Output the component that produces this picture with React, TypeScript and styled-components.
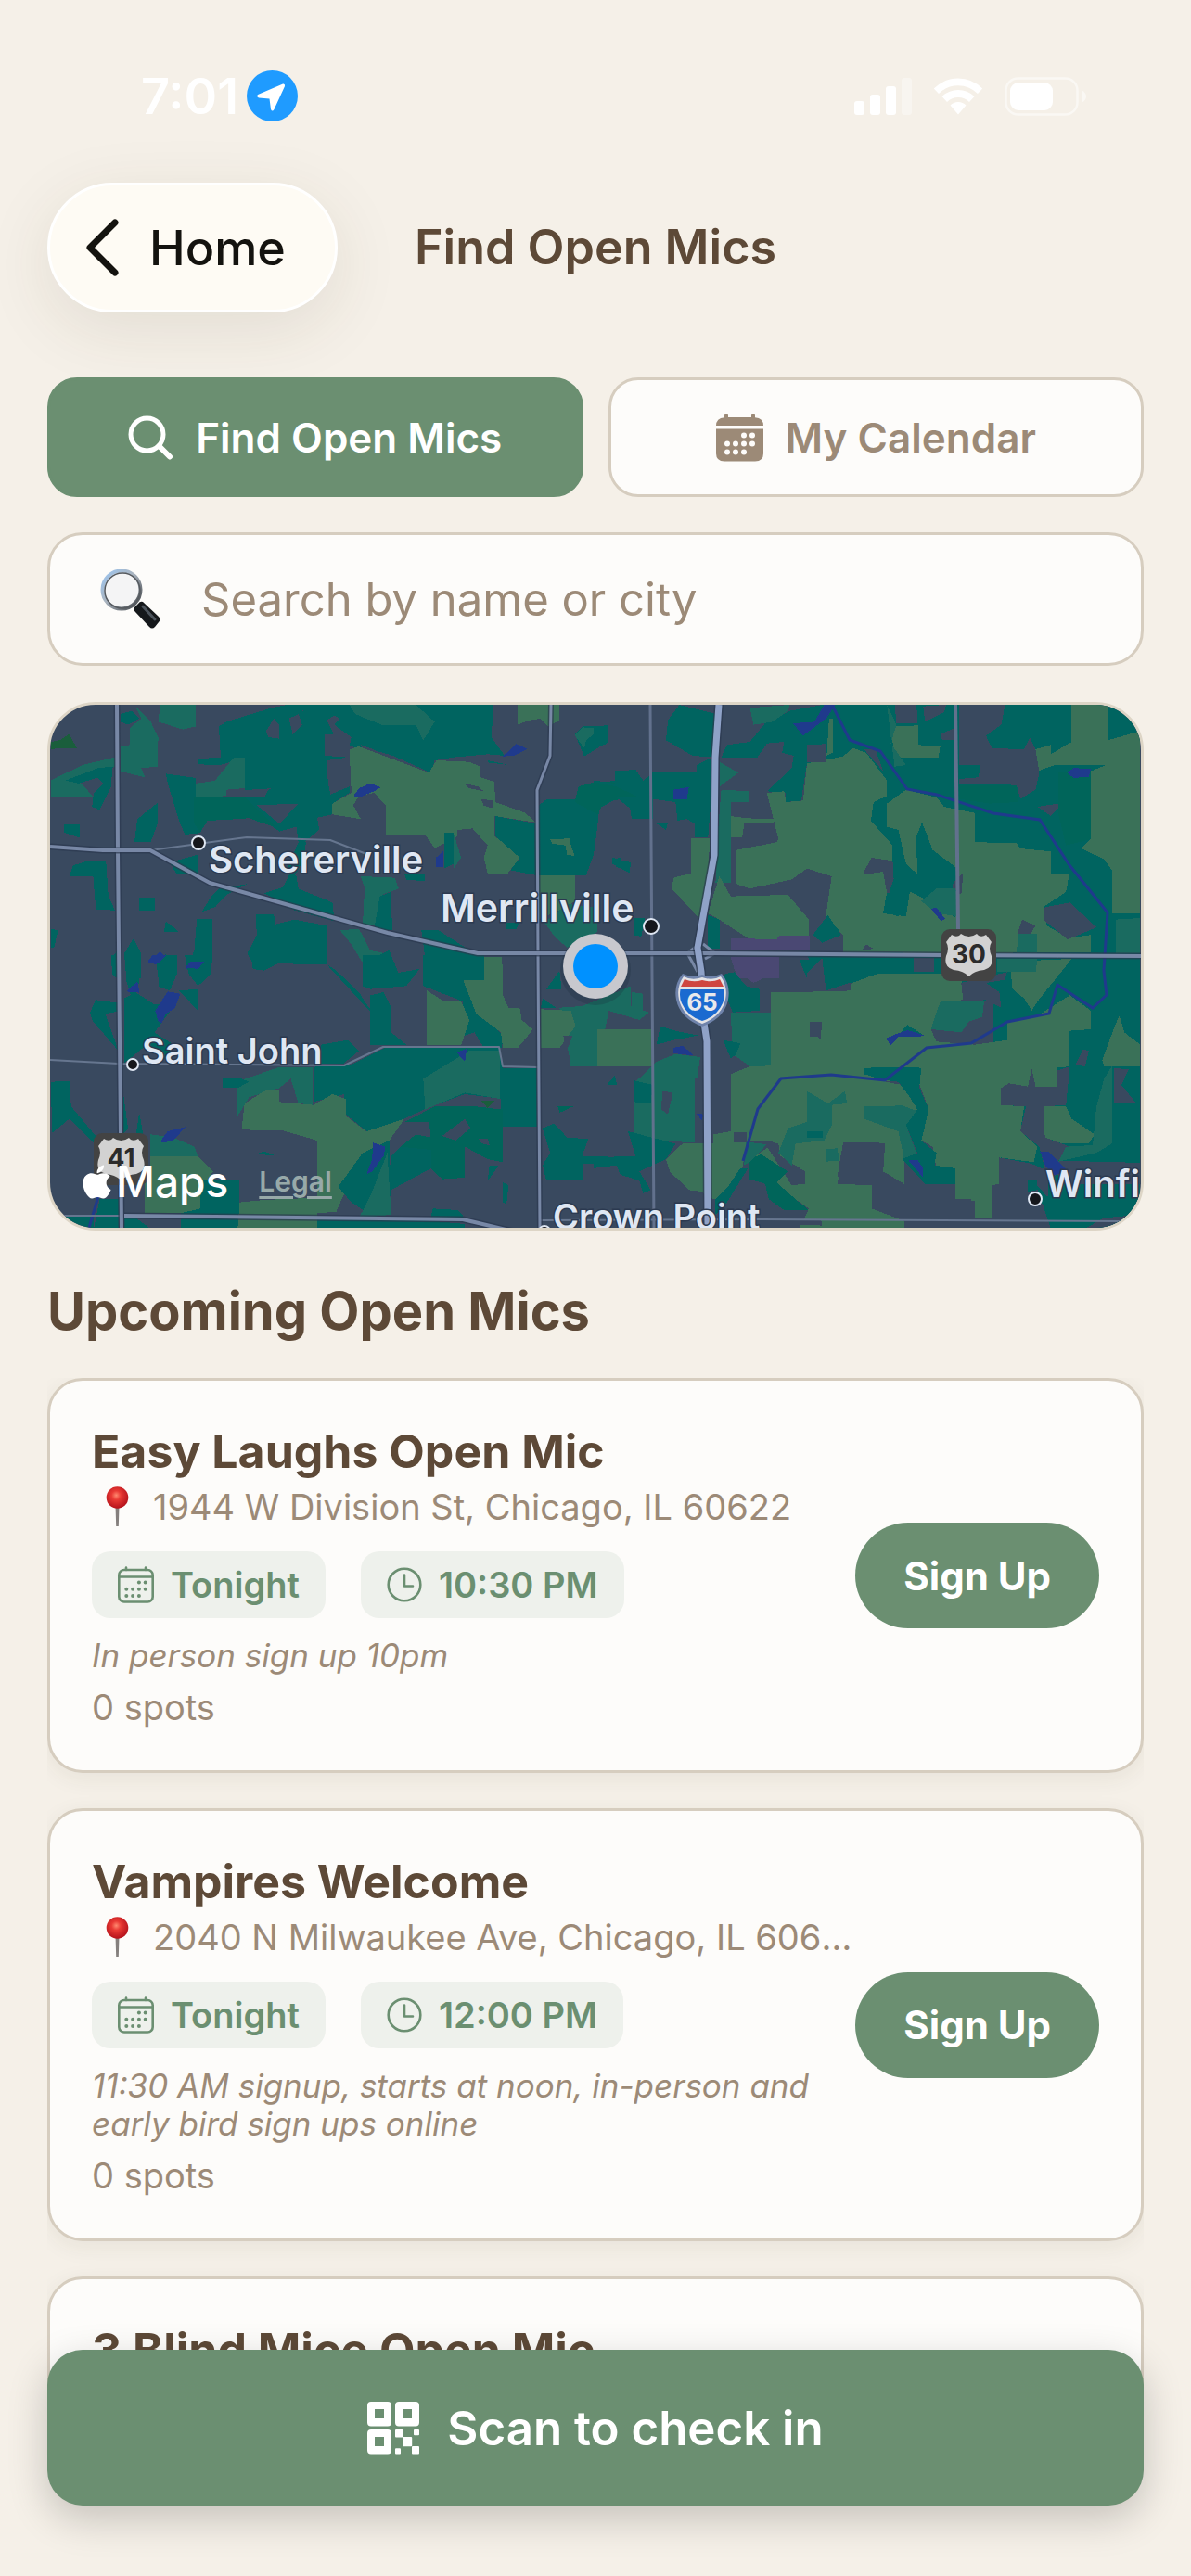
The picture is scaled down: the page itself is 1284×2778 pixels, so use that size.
import React, { useState } from "react";
import styled, { createGlobalStyle, css } from "styled-components";
import { FaApple } from "react-icons/fa";

const palette = {
  sand: "#f5f0e8",
  card: "#fdfcfa",
  line: "#d6cdbf",
  brown: "#5d4937",
  taupe: "#9c8a77",
  green: "#6b8f71",
  mint: "#eef1ec",
};

const mapColors = {
  base: "#39495f",
  wood: "#006460",
  forest: "#00655a",
  park: "#1a6b60",
  field: "#3a7158",
  moss: "#1a5e3c",
  water: "#1f3a8c",
  zone: "#4a4873",
  road: "#7888a6",
  minor: "#66768f",
  casing: "#2b3950",
  freeway: "#8fa2c8",
  label: "#dfe7f3",
};

const GlobalStyle = createGlobalStyle`
  * {
    box-sizing: border-box;
  }
  body {
    margin: 0;
    background-color: ${palette.sand};
    font-family: Inter, "Liberation Sans", sans-serif;
    color: ${palette.brown};
  }
  button, input {
    font-family: inherit;
  }
  h1, h2, h3, p {
    margin: 0;
  }
`;

const Screen = styled.div`
  display: flex;
  flex-direction: column;
  height: 100vh;
  overflow: hidden;
  background-color: ${palette.sand};
`;

const StatusBar = styled.div`
  display: flex;
  align-items: center;
  justify-content: space-between;
  height: 197px;
  padding: 10px 113px 0 152px;
  color: white;
  flex-shrink: 0;
  .status-time {
    display: flex;
    align-items: center;
    gap: 9px;
    font-size: 54px;
    font-weight: 600;
  }
  .status-icons {
    display: flex;
    align-items: center;
    gap: 23px;
  }
  svg {
    display: block;
  }
`;

const NavBar = styled.header`
  display: grid;
  grid-template-columns: 1fr auto 1fr;
  align-items: center;
  padding: 0 51px;
  margin-bottom: 70px;
  flex-shrink: 0;
`;

const BackButton = styled.button`
  display: flex;
  align-items: center;
  justify-self: start;
  gap: 32px;
  height: 140px;
  padding: 0 53px 0 38px;
  border: 3px solid white;
  border-radius: 70px;
  background-color: #fefbf4;
  box-shadow: 0 18px 72px rgba(70, 60, 30, 0.1);
  color: #14130f;
  font-size: 52px;
  font-weight: 500;
  cursor: pointer;
`;

const Title = styled.h1`
  font-size: 52px;
  line-height: 62px;
  font-weight: 600;
`;

const Tabs = styled.nav`
  display: grid;
  grid-template-columns: 1fr 1fr;
  gap: 27px;
  padding: 0 51px;
  margin-bottom: 38px;
  flex-shrink: 0;
`;

const Tab = styled.button<{ $active: boolean }>`
  display: flex;
  align-items: center;
  justify-content: center;
  gap: 24px;
  height: 129px;
  border: 3px solid ${palette.line};
  border-radius: 32px;
  background-color: ${palette.card};
  color: ${palette.taupe};
  font-size: 44px;
  font-weight: 600;
  cursor: pointer;
  ${({ $active }) =>
    $active &&
    css`
      border-color: ${palette.green};
      background-color: ${palette.green};
      color: white;
    `}
`;

const SearchBox = styled.label`
  display: flex;
  align-items: center;
  gap: 44px;
  height: 144px;
  margin: 0 51px 39px;
  padding: 0 54px;
  border: 3px solid ${palette.line};
  border-radius: 38px;
  background-color: ${palette.card};
  flex-shrink: 0;
  input {
    flex: 1;
    min-width: 0;
    padding: 0;
    border: 0;
    outline: none;
    background: transparent;
    color: ${palette.brown};
    font-size: 49px;
    &::placeholder {
      color: ${palette.taupe};
      opacity: 1;
    }
  }
`;

const MapFrame = styled.section`
  position: relative;
  height: 570px;
  margin: 0 51px 53px;
  border: 3px solid #ddd5c6;
  border-radius: 52px;
  overflow: hidden;
  background-color: ${mapColors.base};
  flex-shrink: 0;
  .map-canvas {
    display: block;
    width: 100%;
    height: 100%;
  }
`;

const MapCredit = styled.div`
  position: absolute;
  left: 30px;
  bottom: 22px;
  display: flex;
  align-items: center;
  color: white;
  font-size: 46px;
  line-height: 56px;
  font-weight: 500;
  a {
    margin-left: 33px;
    color: #97a9a9;
    font-size: 30px;
    font-weight: 600;
    text-underline-offset: 5px;
  }
`;

const ListHeading = styled.h2`
  margin: 0 51px 38px;
  font-size: 56px;
  line-height: 68px;
  font-weight: 700;
  flex-shrink: 0;
`;

const List = styled.div`
  display: flex;
  flex-direction: column;
  flex: 1;
  min-height: 0;
  gap: 38px;
  margin: 0 51px;
  overflow-y: auto;
  scrollbar-width: none;
`;

const Card = styled.article`
  display: flex;
  align-items: center;
  padding: 45px;
  border: 3px solid ${palette.line};
  border-radius: 38px;
  background-color: ${palette.card};
  box-shadow: 0 6px 24px rgba(60, 60, 30, 0.07);
  flex-shrink: 0;
`;

const Info = styled.div`
  flex: 1;
  min-width: 0;
`;

const MicName = styled.h3`
  font-size: 50px;
  line-height: 62px;
  font-weight: 700;
`;

const Address = styled.p`
  display: flex;
  align-items: center;
  gap: 26px;
  margin: 5px 0 24px;
  padding-left: 15px;
  color: ${palette.taupe};
  font-size: 38px;
  line-height: 48px;
  span {
    overflow: hidden;
    white-space: nowrap;
    text-overflow: ellipsis;
  }
  svg {
    flex-shrink: 0;
  }
`;

const Chips = styled.div`
  display: flex;
  gap: 38px;
  margin-bottom: 20px;
`;

const Chip = styled.span`
  display: flex;
  align-items: center;
  gap: 18px;
  height: 72px;
  padding: 0 28px;
  border-radius: 20px;
  background-color: ${palette.mint};
  color: ${palette.green};
  font-size: 38px;
  font-weight: 600;
`;

const Note = styled.p`
  margin-bottom: 12px;
  color: ${palette.taupe};
  font-size: 35px;
  line-height: 41px;
  font-style: italic;
`;

const Spots = styled.p`
  color: ${palette.taupe};
  font-size: 38px;
  line-height: 46px;
`;

const SignUpButton = styled.button`
  height: 114px;
  padding: 0 52px;
  border: 0;
  border-radius: 57px;
  background-color: ${palette.green};
  color: white;
  font-size: 42px;
  font-weight: 700;
  white-space: nowrap;
  cursor: pointer;
`;

const Footer = styled.footer`
  position: relative;
  margin-top: -60px;
  padding: 0 51px 76px;
  flex-shrink: 0;
`;

const ScanButton = styled.button`
  display: flex;
  align-items: center;
  justify-content: center;
  gap: 30px;
  width: 100%;
  height: 168px;
  border: 0;
  border-radius: 38px;
  background-color: ${palette.green};
  box-shadow: 0 14px 44px rgba(0, 0, 0, 0.2);
  color: white;
  font-size: 51px;
  font-weight: 600;
  cursor: pointer;
`;

const LocationIcon = () => (
  <svg width="55" height="55" viewBox="0 0 55 55" aria-hidden="true">
    <circle cx="27.5" cy="27.5" r="27.5" fill="#1f9bff" />
    <path
      d="M39 14.500 L12 26 Q10 28 13 29.500 L24.500 30.500 L26 42 Q27.500 45 29.500 42 L41 17 Q41.500 14 39 14.500Z"
      fill="white"
    />
  </svg>
);

const SignalIcon = () => (
  <svg width="62" height="40" viewBox="0 0 62 40" fill="white" aria-hidden="true">
    <rect x="0" y="25" width="11" height="15" rx="3" />
    <rect x="17" y="18" width="11" height="22" rx="3" />
    <rect x="34" y="9" width="11" height="31" rx="3" />
    <rect x="51" y="0" width="11" height="40" rx="3" opacity="0.35" />
  </svg>
);

const WifiIcon = () => (
  <svg width="54" height="40" viewBox="0 0 54 40" fill="white" aria-hidden="true">
    <path d="M0.800 11.500 Q12 0.500 27 0.500 Q42 0.500 53.200 11.500 L48 17 Q39 8.200 27 8.200 Q15 8.200 6 17Z" />
    <path d="M9.500 20 Q17 13 27 13 Q37 13 44.500 20 L39 26 Q34 21 27 21 Q20 21 15 26Z" />
    <path d="M18.500 29.500 Q22 26 27 26 Q32 26 35.500 29.500 L27 39.500Z" />
  </svg>
);

const BatteryIcon = () => (
  <svg width="88" height="42" viewBox="0 0 88 42" aria-hidden="true">
    <rect x="1.500" y="1.500" width="77" height="39" rx="13" fill="none" stroke="white" strokeWidth="2.500" opacity="0.5" />
    <path d="M83 14 Q88 17 88 21 Q88 25 83 28Z" fill="white" opacity="0.5" />
    <rect x="6" y="6" width="46" height="30" rx="9" fill="white" />
  </svg>
);

const ChevronIcon = () => (
  <svg width="37" height="64" viewBox="0 0 37 64" aria-hidden="true">
    <path d="M32 5 L5 32 L32 59" fill="none" stroke="#14130f" strokeWidth="7" strokeLinecap="round" strokeLinejoin="round" />
  </svg>
);

const SearchIcon = () => (
  <svg width="49" height="48" viewBox="0 0 49 48" fill="none" stroke="currentColor" strokeLinecap="round" aria-hidden="true">
    <circle cx="20.500" cy="20.500" r="17.500" strokeWidth="5" />
    <path d="M33.500 33 L45 44.500" strokeWidth="6" />
  </svg>
);

const dots = [
  [3, 0], [4, 0],
  [1, 1], [2, 1], [3, 1], [4, 1],
  [1, 2], [2, 2], [3, 2],
];

const CalendarFilledIcon = () => (
  <svg width="51" height="52" viewBox="0 0 51 52" fill="currentColor" aria-hidden="true">
    <path d="M9 5 V2 Q9 0 11 0 Q13 0 13 2 V4 H38 V2 Q38 0 40 0 Q42 0 42 2 V4.200 Q51 5 51 13 H0 Q0 5 9 4.200Z" />
    <path d="M0 16.500 H51 V43 Q51 51.500 42 51.500 H9 Q0 51.500 0 43Z" />
    {dots.map(([col, row]) => (
      <circle key={`${col}-${row}`} cx={3 + col * 9} cy={23.5 + row * 9} r="3" fill={palette.card} />
    ))}
  </svg>
);

const CalendarIcon = () => (
  <svg width="39" height="40" viewBox="0 0 39 40" aria-hidden="true">
    <g fill="none" stroke="currentColor" strokeWidth="2.600" strokeLinecap="round">
      <rect x="1.300" y="4" width="36.400" height="34.500" rx="5.500" />
      <path d="M1.500 11.500 H37.500 M9 4 V1.500 M30 4 V1.500" />
    </g>
    {dots.map(([col, row]) => (
      <circle key={`${col}-${row}`} cx={2.5 + col * 6.8} cy={17.5 + row * 7.2} r="2" fill="currentColor" />
    ))}
  </svg>
);

const ClockIcon = () => (
  <svg width="38" height="38" viewBox="0 0 38 38" fill="none" stroke="currentColor" strokeWidth="2.600" strokeLinecap="round" strokeLinejoin="round" aria-hidden="true">
    <circle cx="19" cy="19" r="17.300" />
    <path d="M19 8.500 V20.500 H28" />
  </svg>
);

const MagnifierIcon = () => (
  <svg width="65" height="64" viewBox="0 0 65 64" aria-hidden="true">
    <defs>
      <linearGradient id="rim" x1="0" y1="0" x2="1" y2="1">
        <stop offset="0" stopColor="#9cc6f2" />
        <stop offset="0.45" stopColor="#aab4bf" />
        <stop offset="1" stopColor="#3f4246" />
      </linearGradient>
    </defs>
    <path d="M46 35 Q43 34 41 37 L37 41 Q36 44 38 46 L53 62 Q56 65 59 62 L63 57 Q66 54 63 51Z" fill="#15181b" />
    <path d="M46 40 L59 54" stroke="#4c545c" strokeWidth="3" strokeLinecap="round" />
    <circle cx="23" cy="22" r="20.500" fill="#f4f4f5" stroke="url(#rim)" strokeWidth="4" />
    <circle cx="24" cy="23" r="19" fill="none" stroke="#55595e" strokeWidth="1.500" />
  </svg>
);

const PinIcon = () => (
  <svg width="25" height="44" viewBox="0 0 25 44" aria-hidden="true">
    <defs>
      <radialGradient id="pin" cx="0.45" cy="0.4" r="0.6">
        <stop offset="0" stopColor="#ff8a70" />
        <stop offset="0.35" stopColor="#e93a34" />
        <stop offset="1" stopColor="#b5121b" />
      </radialGradient>
    </defs>
    <path d="M10.500 20 H14.500 L13.800 43 H11.200Z" fill="#85807e" />
    <circle cx="12.500" cy="12" r="11.800" fill="url(#pin)" />
  </svg>
);

const QrIcon = () => (
  <svg width="56" height="57" viewBox="0 0 56 57" fill="white" aria-hidden="true">
    {[[0, 0], [30, 0], [0, 30]].map(([x, y]) => (
      <path
        key={`${x}-${y}`}
        fillRule="evenodd"
        transform={`translate(${x} ${y})`}
        d="M4 0 H22 Q26 0 26 4 V22.500 Q26 26.500 22 26.500 H4 Q0 26.500 0 22.500 V4 Q0 0 4 0Z M8 8 V18 H18 V8Z"
      />
    ))}
    <rect x="30" y="30" width="8.500" height="8.500" rx="1" />
    <rect x="50" y="30" width="6" height="6.300" rx="1" />
    <rect x="38" y="38" width="10.200" height="10.200" rx="1" />
    <rect x="30" y="50.200" width="6" height="6.300" rx="1" />
    <rect x="48" y="48" width="8" height="8.500" rx="1" />
  </svg>
);

type Land = [keyof typeof mapColors, string];

// Land cover, one list of [kind, points] per tile, painted in order
const tiles: { id: string; transform: string; land: Land[] }[] = [
  {
    id: "nw",
    transform: "translate(-14 -15) scale(.4082 .3333)",
    land: [
      ["wood", "220,75 250,65 270,90 240,110 220,100"],
      ["wood", "480,115 500,100 620,55 660,45 705,45 700,75 1205,45 1200,150 1235,210 1190,205 1100,215 1050,225 1040,265 940,210 870,185 860,200 785,145 800,115 770,120 780,80 795,95 760,140 760,210 820,215 765,225 765,280 775,335 825,310 825,330 780,365 780,400 740,410 745,450 700,495 685,440 640,455 610,430 575,400 525,415 450,420 430,460 390,465 375,420 345,300 340,268 420,282 420,345 550,345 620,315 550,320 548,215 485,240 425,238 425,220 485,215"],
      ["wood", "705,45 1205,45 1200,130 760,140 690,140"],
      ["wood", "625,220 765,215 770,330 560,345 550,300 620,320"],
      ["base", "605,130 625,90 640,110 640,155 610,150"],
      ["base", "665,90 690,75 700,110 675,140"],
      ["base", "580,370 690,365 640,430"],
      ["base", "555,320 612,318 600,345 555,345"],
      ["base", "785,80 800,90 785,110 830,150 825,180 785,145 765,95"],
      ["base", "855,175 890,190 865,205"],
      ["park", "325,45 420,45 420,115 385,125 320,100"],
      ["park", "245,120 275,90 260,50 300,100 320,150 318,245 275,250 285,280 220,260 220,180 245,175"],
      ["park", "36,290 120,240 205,215 205,245 110,290 150,345 36,345"],
      ["wood", "75,290 160,250 200,245 195,310 165,385 145,375 150,330 175,300 160,280 110,300"],
      ["park", "420,300 470,290 520,215 548,215 548,315 500,320 500,340 420,345"],
      ["park", "825,45 1000,45 1050,100 1020,160 1000,110 910,110 840,75"],
      ["forest", "415,345 550,345 630,440 600,430 560,412 450,420 430,455 415,430"],
      ["field", "825,190 850,180 1035,265 1055,225 1140,230 1172,245 1172,280 1208,295 1210,360 1290,395 1315,425 1260,415 1208,405 1208,470 1250,510 1275,540 1240,595 1190,590 1180,540 1190,500 1150,445 1110,450 1110,470 1050,510 1025,465 920,465 920,370 890,330 850,340 835,370 855,415 780,400 780,365 830,330"],
      ["base", "1130,300 1165,310 1180,325 1140,315"],
      ["base", "1172,350 1205,355 1205,380 1180,372"],
      ["field", "1268,45 1380,45 1380,95 1350,115 1330,90 1300,95 1268,110"],
      ["wood", "1420,140 1440,115 1508,112 1508,165 1445,212"],
      ["park", "1420,145 1440,118 1490,122 1450,160 1445,185"],
      ["wood", "1210,405 1320,430 1325,370 1345,352 1425,352 1430,310 1525,290 1525,258 1568,258 1568,360 1530,350 1485,380 1480,440 1470,530 1450,597 1320,597 1250,580 1275,540 1210,470"],
      ["forest", "1430,310 1480,292 1568,300 1568,350 1500,355 1480,400 1420,360"],
      ["field", "1355,480 1405,478 1420,535 1400,530 1395,500 1360,495"],
      ["field", "1325,597 1422,597 1422,680 1395,700 1325,740"],
      ["park", "1340,750 1400,690 1480,700 1480,780 1400,830 1370,800"],
      ["wood", "257,490 265,415 318,362 318,430 300,490"],
      ["wood", "70,432 112,432 112,475 70,458"],
      ["wood", "85,600 95,565 140,548 182,550 188,660 205,710 155,708 148,600"],
      ["wood", "270,668 310,668 310,710 270,710"],
      ["wood", "335,780 340,745 375,780"],
      ["wood", "350,555 425,530 425,595 370,595"],
      ["wood", "435,715 460,665 480,640 555,625 500,660 470,700"],
      ["wood", "600,655 650,635 668,590 685,600 690,640 780,685 785,745 680,710"],
      ["wood", "685,440 710,490 705,545 680,600 655,590 690,490"],
      ["wood", "578,722 625,722 630,755 680,740 765,760 765,885 690,885 630,870 580,905 555,850 580,790"],
      ["park", "855,600 945,605 955,640 910,660 915,690 890,760 860,755 865,640"],
      ["wood", "905,665 935,650 938,775 890,770"],
      ["park", "800,775 850,770 880,840 920,850 860,880 830,820"],
      ["wood", "1015,775 1060,775 1130,830 1180,860 1180,930 1110,930 1030,910"],
      ["field", "1180,860 1228,865 1230,930 1180,930"],
      ["wood", "422,738 463,738 463,875 440,930 395,900 415,840"],
      ["wood", "230,850 255,800 275,850 275,930 235,920"],
      ["wood", "315,880 340,850 365,930 320,930"],
      ["wood", "195,870 212,840 212,930 200,920"],
      ["wood", "860,880 930,840 960,930 870,930"],
      ["wood", "36,770 55,775 45,830 36,830"],
      ["wood", "1075,460 1100,460 1100,560 1075,575"],
      ["park", "1100,460 1120,540 1100,575"],
      ["wood", "970,590 1025,590 1025,615 975,612"],
      ["wood", "1190,225 1245,240 1190,232"],
      ["wood", "1520,540 1568,555 1565,590 1520,560"],
      ["wood", "1240,750 1275,750 1265,772 1240,770"],
      ["moss", "36,165 60,160 85,140 105,185 36,188"],
      ["water", "836,340 850,315 880,300 908,312 890,325 850,345"],
      ["water", "1230,212 1265,172 1295,188 1260,210"],
      ["water", "1053,540 1072,520 1072,570 1053,570"],
      ["water", "785,560 800,558 797,590"],
      ["water", "293,880 325,842 342,865 315,885"],
      ["water", "392,890 405,878 441,880 425,900 392,900"],
    ],
  },
  {
    id: "ne",
    transform: "translate(586 -15) scale(.4107 .3333)",
    land: [
      ["wood", "615,45 1435,45 1435,930 655,930 655,790 600,720 560,400 560,235"],
      ["wood", "335,215 350,175 410,165 450,105 515,65 600,45 640,45 600,235 560,235 545,355 505,360 505,330 455,325 520,250 525,210 495,200 500,165 455,170 430,215"],
      ["wood", "195,95 225,45 320,75 315,215 260,210 190,160"],
      ["wood", "270,240 310,215 310,330 300,475 265,475 265,430 245,415 220,420 215,360 155,350 155,415 100,415 95,380 60,345 0,390 0,290 55,300 55,260 110,255 130,290 155,265 270,260"],
      ["forest", "0,295 60,310 120,345 60,345 0,390"],
      ["wood", "0,115 40,112 35,170 0,190"],
      ["park", "330,230 380,265 330,310"],
      ["park", "335,320 410,325 410,360 360,360 360,620 320,620 325,480"],
      ["park", "410,55 515,45 510,65 470,100 420,110"],
      ["base", "345,60 400,50 415,110 410,165 375,170 350,130"],
      ["field", "560,235 655,212 680,185 715,200 770,290 770,340 735,360 728,420 770,480 785,500 785,560 770,650 760,720 820,730 830,650 880,680 960,740 955,850 655,845 655,790 610,730 610,650 625,600 600,610 560,575 520,610 410,640 375,625 375,515 480,490 485,480 455,330 500,325 505,360 550,355"],
      ["field", "770,365 820,320 900,345 920,375 1000,395 1000,490 1110,492 1120,510 1200,520 1200,590 1248,595 1240,650 1180,700 1190,760 1245,800 1305,790 1305,845 915,850 945,770 960,600 890,515 862,425 845,480 852,595 820,560 800,450 770,440"],
      ["field", "1255,45 1350,45 1350,160 1435,130 1435,720 1362,720 1360,580 1340,545 1280,510 1305,480 1305,260 1345,240 1210,240 1165,260 1158,190 1200,175 1200,205 1255,165"],
      ["field", "780,115 852,112 852,175 910,180 905,215 790,215"],
      ["field", "618,90 628,90 628,200 612,210"],
      ["field", "255,478 305,478 300,600 280,740 205,640 210,605 255,590"],
      ["field", "300,720 330,600 360,665 510,660 565,740 565,805 410,805 330,740"],
      ["field", "360,405 400,412 475,415 470,430 395,430 390,475 360,475"],
      ["base", "560,175 608,172 608,230 560,230"],
      ["base", "710,190 740,190 760,260"],
      ["base", "790,45 848,45 850,105 795,105"],
      ["base", "865,50 925,45 920,70 870,100"],
      ["base", "910,140 950,120 945,160 915,160"],
      ["base", "960,45 1080,45 1070,110 1030,145 1045,185 1130,190 1145,150 1160,190 1170,265 1160,320 1120,350 1110,305 960,300 960,285 1010,280 1015,240 960,240"],
      ["base", "1165,375 1235,362 1200,405"],
      ["base", "1185,700 1250,685 1320,765 1245,805 1180,740"],
      ["base", "1125,740 1160,760 1145,790 1112,785"],
      ["base", "705,595 730,540 785,550 790,650 770,655 760,585"],
      ["base", "360,620 410,640 520,615 560,575 625,600 608,740 655,790 655,845 570,840 565,735 510,660 360,665"],
      ["wood", "575,790 615,725 650,790 600,815"],
      ["base", "935,630 970,590 965,660"],
      ["base", "715,820 735,835 705,838"],
      ["wood", "850,470 862,425 885,510 955,575 940,640 880,660 830,650 800,730 760,715 790,600 800,560 850,595"],
      ["forest", "960,305 1110,305 1115,360 1040,365 960,350"],
      ["forest", "1220,260 1305,280 1305,480 1240,500 1220,400"],
      ["park", "860,680 900,640 950,640 960,730 900,720"],
      ["park", "770,45 795,110 780,170 820,240 790,245"],
      ["park", "1110,850 1115,785 1165,785 1165,850"],
      ["park", "1370,740 1435,735 1435,850 1370,850"],
      ["wood", "300,725 330,740 330,835 300,835"],
      ["zone", "360,800 480,805 488,792 567,792 567,838 360,838"],
      ["base", "560,865 655,862 655,930 560,930"],
      ["wood", "540,870 790,865 790,910 690,930 560,930"],
      ["field", "690,925 790,905 1165,860 1270,865 1200,930 700,930"],
      ["base", "840,870 893,870 893,910 840,910"],
      ["zone", "360,865 487,865 487,930 380,930"],
      ["water", "523,105 580,100 605,45 635,45 610,90 550,145"],
      ["water", "1243,265 1260,250 1305,252 1300,278 1260,282"],
      ["water", "210,320 250,312 245,350 210,350"],
      ["water", "885,705 900,702 923,738 912,745"],
      ["wood", "47,545 70,540 95,585 60,570"],
      ["wood", "160,425 195,425 190,450"],
      ["wood", "105,735 135,735 125,795 105,790"],
    ],
  },
  {
    id: "sw",
    transform: "translate(-14 270) scale(.4082 .3333)",
    land: [
      ["wood", "195,0 215,0 215,60 205,50"],
      ["wood", "235,80 240,0 275,0 270,90 250,140"],
      ["wood", "320,0 370,0 370,60 350,115 320,100"],
      ["wood", "390,0 463,0 460,60 425,100 400,60"],
      ["wood", "565,0 765,0 765,30 690,30 640,25 600,50 570,45"],
      ["wood", "765,30 790,50 850,120 860,140 905,220 880,290 885,190"],
      ["wood", "230,140 260,120 310,160 370,150 310,250 360,290 345,340 280,300 230,350"],
      ["wood", "375,115 425,110 425,180"],
      ["wood", "140,185 155,145 215,155 225,180 180,190 215,310 145,210"],
      ["wood", "860,0 930,0 940,60 1010,45 975,100 880,110 860,100"],
      ["wood", "880,130 915,120 935,170 935,250 975,290 880,290"],
      ["wood", "1020,0 1180,0 1180,80 1125,80 1165,180 1230,260 1228,300 1180,300 1155,250 1130,260 1125,150 1020,100"],
      ["field", "1180,5 1228,5 1230,130 1245,170 1275,172 1280,210 1310,240 1270,300 1230,300 1225,250 1160,190 1125,80 1180,80"],
      ["field", "1030,115 1075,150 1120,150 1142,210 1120,290 1030,290"],
      ["wood", "750,290 820,275 850,310 810,350 740,350"],
      ["wood", "730,362 830,355 920,300 1220,300 1230,365 1320,365 1320,555 1222,555 1225,465 1130,450 1020,500 970,530 870,570 815,515 810,450 730,475"],
      ["park", "528,410 640,362 728,362 728,485 690,480 670,400 640,430 560,460 530,520"],
      ["park", "1020,400 1140,310 1222,310 1222,465 1130,445 1025,500"],
      ["field", "548,480 600,440 640,435 640,475 730,485 780,450 815,465 815,520 870,570 970,530 930,600 885,640 865,710 830,720 790,830 740,835 740,600 650,568 540,565"],
      ["forest", "970,540 1050,490 1160,490 1230,500 1230,670 1190,660 1130,620 1130,720 1070,725 1040,690 1040,630 960,620 1000,580 1040,590 1035,540"],
      ["base", "1070,585 1130,530 1145,560 1105,600"],
      ["base", "1165,595 1190,595 1195,615 1175,610"],
      ["moss", "1172,470 1210,470 1190,495"],
      ["wood", "795,750 860,640 930,600 935,780 900,780 880,840 830,800"],
      ["park", "925,640 935,840 850,850 880,780"],
      ["wood", "960,620 1040,630 1040,690 1010,710 935,760 935,650"],
      ["wood", "36,410 85,408 90,490 165,600 160,620 85,530 40,575"],
      ["wood", "490,395 530,395 560,410 530,430 490,430"],
      ["wood", "270,510 280,580 260,590"],
      ["wood", "228,450 240,560 228,580"],
      ["park", "300,580 360,590 415,620 425,650 300,650"],
      ["field", "300,650 425,650 465,700 440,740 430,820 400,835 285,835 285,735 300,700"],
      ["wood", "435,730 535,730 535,885 380,885 380,835 430,820"],
      ["field", "535,800 600,792 740,785 740,885 530,885"],
      ["wood", "165,790 215,790 215,885 150,885"],
      ["wood", "50,845 150,845 150,885 110,885"],
      ["wood", "230,850 260,850 300,885 230,885"],
      ["wood", "575,645 600,635 628,648"],
      ["wood", "1040,850 1045,820 1110,825 1130,850"],
      ["wood", "740,850 950,850 1130,870 1130,885 740,885"],
      ["wood", "1345,110 1380,50 1385,110"],
      ["wood", "1330,170 1335,140 1370,170"],
      ["park", "1380,170 1440,165 1530,120 1568,100 1568,170 1500,180 1500,240 1490,360 1410,360 1400,290"],
      ["field", "1330,175 1410,180 1422,230 1380,300 1330,300"],
      ["field", "1490,240 1568,240 1568,360 1480,360"],
      ["base", "1500,185 1568,180 1568,238 1500,238"],
      ["base", "1390,260 1415,260 1395,320"],
      ["wood", "1335,560 1365,545 1400,590 1455,595 1440,650 1568,655 1568,670 1440,675 1440,730 1345,730 1335,680 1355,640"],
      ["forest", "1375,490 1420,488 1380,510"],
      ["wood", "1230,735 1245,745 1240,805 1230,800"],
      ["wood", "1195,680 1220,680 1190,730"],
      ["wood", "1505,420 1525,390 1530,420"],
      ["water", "887,607 920,620 915,650 885,700 870,710 885,660"],
      ["water", "327,600 345,570 392,556 360,600 330,608"],
      ["water", "235,118 265,85 270,122"],
      ["water", "312,180 345,118 378,125 365,170 340,190 330,220 320,215"],
      ["water", "293,20 305,0 342,0 320,28"],
      ["water", "392,40 405,22 441,22 425,45"],
      ["water", "1108,315 1135,303 1130,345"],
    ],
  },
  {
    id: "se",
    transform: "translate(586 270) scale(.4107 .3333)",
    land: [
      ["wood", "560,0 1435,10 1435,885 1050,885 1050,150 670,90 610,115"],
      ["field", "360,385 410,360 465,358 465,120 610,118 675,115 675,92 745,60 965,60 970,145 910,150 885,240 900,280 1000,290 1085,275 1085,220 1160,200 1250,130 1305,180 1305,240 1250,245 1250,360 1215,365 1215,425 1155,425 1070,430 1070,485 1130,490 1120,570 1165,620 1155,670 1068,655 1065,740 1045,745 1045,850 1000,850 990,790 950,790 950,690 900,690 890,620 860,600 880,500 850,400 800,400 765,410 810,420 830,460 850,500 820,550 815,740 760,700 765,610 655,605 640,740 730,745 730,820 815,860 815,885 540,885 565,820 470,740 410,660 480,605 360,600"],
      ["base", "600,10 610,115 560,120 560,60"],
      ["field", "10,240 155,240 155,360 10,360"],
      ["park", "0,170 60,150 145,185 120,210 40,180 30,240 0,240"],
      ["park", "165,345 215,320 280,330 265,450 270,608 180,600 105,605 110,410"],
      ["park", "100,120 130,125 130,180 100,180"],
      ["wood", "175,230 215,245 275,260 210,275 165,290"],
      ["base", "180,440 208,445 195,515 178,500"],
      ["base", "265,400 285,395 285,608 265,608"],
      ["wood", "105,405 155,420 150,480 105,475"],
      ["wood", "40,420 55,390 62,420"],
      ["wood", "90,570 215,610 190,660 120,700 150,760 130,770 120,730 70,710 60,680 0,690 0,655 110,650"],
      ["field", "190,660 235,608 315,608 315,580 360,570 360,600 405,600 385,720 340,790 315,790 280,765 250,760 200,700"],
      ["base", "368,572 402,572 402,605 368,605"],
      ["park", "360,185 465,185 465,358 410,360 365,320"],
      ["wood", "345,60 370,55 400,100 435,110 435,180 365,185 340,110"],
      ["wood", "340,275 385,285 375,320 360,335"],
      ["field", "1095,60 1110,20 1255,12 1165,150 1150,180 1130,140 1100,110"],
      ["park", "1060,12 1165,12 1160,55 1060,55"],
      ["base", "840,10 893,10 893,55 840,55"],
      ["base", "965,90 1085,55 1080,80 1030,90 1065,120 1070,170 1030,145 970,145"],
      ["field", "1335,340 1365,240 1380,195 1393,250 1435,290 1435,360 1340,360"],
      ["base", "567,217 600,217 595,275 590,265 567,265"],
      ["base", "1070,430 1090,415 1140,425 1150,365 1160,425 1215,425 1215,375 1250,360 1240,485 1180,490 1185,590 1250,620 1220,665 1440,672 1440,700 1250,700 1190,720 1170,620 1120,570 1135,490 1068,485"],
      ["field", "1180,490 1240,490 1255,530 1315,580 1300,610 1230,610 1185,590"],
      ["base", "1065,655 1150,675 1195,700 1190,840 1200,885 815,885 815,860 730,820 730,740 870,740 950,740 950,790 1000,795 1000,850 1045,850 1045,745 1065,740"],
      ["base", "1220,672 1440,672 1440,740 1220,740"],
      ["base", "655,605 765,608 760,700 730,740 655,740 640,715"],
      ["base", "1365,365 1405,370 1385,420 1425,480 1365,480"],
      ["base", "1265,355 1285,305 1300,310 1290,360"],
      ["base", "450,610 485,610 490,650 555,700 555,740 520,745"],
      ["base", "395,700 410,720 410,885 350,885 360,800"],
      ["base", "510,850 600,860 600,875 515,870"],
      ["park", "885,240 910,150 1025,150 1020,200 985,215 965,250"],
      ["park", "560,440 615,480 660,440 665,480 625,485 625,550 605,600 530,610 520,680 485,640 510,560 560,540"],
      ["wood", "560,570 602,570 602,590 560,590"],
      ["park", "610,628 640,625 645,665 610,668"],
      ["park", "710,490 810,487 850,505 820,550 850,650 815,660 800,570 710,530"],
      ["park", "1320,490 1340,400 1360,360 1360,610 1320,640 1220,668 1240,620 1310,615"],
      ["wood", "1160,740 1190,780 1240,750 1435,745 1435,885 1200,885"],
      ["base", "1340,850 1435,840 1435,885 1290,885"],
      ["forest", "410,660 440,645 510,700 480,735 530,790 565,825 500,825 460,790 450,740 410,725"],
      ["park", "400,605 455,612 410,670 395,680"],
      ["wood", "355,745 385,690 405,690 350,800 320,840 320,790"],
      ["wood", "710,365 830,362 860,365 855,430 880,500 860,600 900,640 895,680 950,690 950,740 870,740 810,660 850,640 820,550 850,500 830,460 800,410 765,405 710,385"],
      ["wood", "800,260 823,225 870,262"],
      ["wood", "1140,730 1165,730 1165,760 1140,765"],
      ["zone", "360,5 487,5 487,50 420,90 370,50"],
      ["water", "767,270 795,255 825,243 873,262 800,265 780,292"],
      ["water", "210,300 235,293 262,325 210,318"],
      ["water", "825,662 850,662 865,690 865,720"],
      ["water", "1172,637 1195,637 1245,700 1210,712 1185,680"],
      ["water", "268,512 287,515 285,535"],
    ],
  },
];

const towns = [
  { name: "Schererville", x: 171, y: 181, size: 40, dot: [160, 149, 7] },
  { name: "Merrillville", x: 421, y: 234, size: 41, dot: [648, 239, 8] },
  { name: "Saint John", x: 99, y: 387, size: 38, dot: [89, 388, 6] },
  { name: "Crown Point", x: 542, y: 566, size: 38, dot: [533, 568, 6] },
  { name: "Winfi", x: 1073, y: 531, size: 40, dot: [1062, 533, 7] },
];

const roads = [
  { d: "M108 157 L212 143 L302 146 L341 161", color: mapColors.minor, width: 2 },
  { d: "M0 383 L74 387 L317 389 L359 369 L484 369 L488 390 L526 391", color: mapColors.minor, width: 2 },
  { d: "M0 551 L77 551 M528 556 L767 555 L1155 557 L1176 556", color: mapColors.minor, width: 2 },
  { d: "M647 0 L649 295 L651 564", color: "#62718d", width: 3 },
  { d: "M976 0 L979 242", color: "#62718d", width: 4 },
  { d: "M687 268 L700 258 M687 268 L698 288 M717 268 L704 258 M717 268 L706 274", color: mapColors.road, width: 3 },
];

const mainRoads = [
  { d: "M72 0 L73 157 L76 462 L77 564", color: mapColors.road, width: 4 },
  { d: "M540 0 L539 55 L525 92 L526 270 L528 564", color: mapColors.road, width: 3 },
  { d: "M0 153 L57 157 L108 157 L172 192 L364 246 L461 268 L717 268 L962 270 L1176 271", color: mapColors.road, width: 4 },
  { d: "M80 551 L445 555 L500 568", color: mapColors.road, width: 4 },
  { d: "M721 0 L717 57 L716 162 L698 262 L702 288 L705 343 L708 363 L709 564", color: mapColors.freeway, width: 7 },
];

const UsShield: React.FC<{ x: number; y: number; route: string }> = ({ x, y, route }) => (
  <g transform={`translate(${x} ${y})`}>
    <rect width="59" height="56" rx="9" fill="#434343" />
    <path
      d="M11 6 Q15 9 19 7 L21 5 Q25 8 29.500 8 Q34 8 38 5 L40 7 Q44 9 48 6 L54 14 Q50 20 54 29 Q57 41 46 44 Q35 45 29.500 51 Q24 45 13 44 Q2 41 5 29 Q9 20 5 14Z"
      fill="#d2d2d2"
    />
    <text x="29.500" y="37" textAnchor="middle" fontSize="28" fontWeight="700" fill="#2b2b2b">
      {route}
    </text>
  </g>
);

const OpenMicMap = () => (
  <svg className="map-canvas" viewBox="0 0 1176 564" preserveAspectRatio="xMidYMid slice" role="img" aria-label="Map">
    {tiles.map((tile) => (
      <g key={tile.id} transform={tile.transform} shapeRendering="crispEdges">
        {tile.land.map(([kind, points], i) => (
          <polygon key={i} points={points} fill={mapColors[kind]} />
        ))}
      </g>
    ))}
    <path
      d="M844 2 L862 38 L895 50 L924 91 L956 97 L1017 117 L1067 124 L1099 173 L1140 224 L1136 287 L1139 313 L1124 327 L1086 302 L1077 333 L1032 342 L993 365 L945 370 L900 405 L842 399 L788 403 L763 436 L747 492 M52 530 L42 564"
      fill="none"
      stroke={mapColors.water}
      strokeWidth="3"
    />
    <g fill="none" strokeLinejoin="round">
      {roads.map((road) => (
        <path key={road.d} d={road.d} stroke={road.color} strokeWidth={road.width} />
      ))}
      {mainRoads.map((road) => (
        <React.Fragment key={road.d}>
          <path d={road.d} stroke={mapColors.casing} strokeWidth={road.width + 3} opacity="0.7" />
          <path d={road.d} stroke={road.color} strokeWidth={road.width} />
        </React.Fragment>
      ))}
    </g>
    <UsShield x={961} y={242} route="30" />
    <UsShield x={47} y={462} route="41" />
    <g transform="translate(674 290)">
      <path d="M8 0 Q18 5 29 1 Q40 5 50 0 Q60 12 57 28 Q53 48 29 57 Q5 48 1 28 Q-2 12 8 0Z" fill="#6f83ab" />
      <path d="M9 3 Q18 8 29 4 Q40 8 49 3 Q57 14 54 28 Q50 46 29 54 Q8 46 4 28 Q1 14 9 3Z" fill="#e3e3e6" />
      <path d="M10 6 Q19 10 29 7 Q39 10 48 6 L52 14 H6Z" fill="#cf4640" />
      <path d="M5.500 17 H52.500 Q54 26 51 32 Q45 46 29 51 Q13 46 7 32 Q4 26 5.500 17Z" fill="#1b6ad0" />
      <text x="29" y="40" textAnchor="middle" fontSize="26" fontWeight="700" fill="#e9e9ec">
        65
      </text>
    </g>
    {towns.map(({ name, x, y, size, dot }) => (
      <g key={name}>
        <circle cx={dot[0]} cy={dot[1]} r={dot[2]} fill="#15171c" stroke={mapColors.label} strokeWidth="2" />
        <text
          x={x}
          y={y}
          fontSize={size}
          fontWeight="600"
          fill={mapColors.label}
          stroke={mapColors.casing}
          strokeWidth="3"
          paintOrder="stroke"
        >
          {name}
        </text>
      </g>
    ))}
    <circle cx="588" cy="286" r="38" fill="#1d2a3c" opacity="0.25" />
    <circle cx="588" cy="282" r="35" fill="#c8c8ce" />
    <circle cx="588" cy="282" r="24" fill="#0091ff" />
  </svg>
);

const mics = [
  {
    name: "Easy Laughs Open Mic",
    address: "1944 W Division St, Chicago, IL 60622",
    day: "Tonight",
    time: "10:30 PM",
    note: "In person sign up 10pm",
    spots: 0,
  },
  {
    name: "Vampires Welcome",
    address: "2040 N Milwaukee Ave, Chicago, IL 60647",
    day: "Tonight",
    time: "12:00 PM",
    note: "11:30 AM signup, starts at noon, in-person and early bird sign ups online",
    spots: 0,
  },
  {
    name: "3 Blind Mice Open Mic",
  },
];

const App: React.FC = () => {
  const [tab, setTab] = useState("find");
  const [query, setQuery] = useState("");

  return (
    <>
      <GlobalStyle />
      <Screen>
        <StatusBar>
          <div className="status-time">
            7:01
            <LocationIcon />
          </div>
          <div className="status-icons">
            <SignalIcon />
            <WifiIcon />
            <BatteryIcon />
          </div>
        </StatusBar>
        <NavBar>
          <BackButton type="button">
            <ChevronIcon />
            Home
          </BackButton>
          <Title>Find Open Mics</Title>
        </NavBar>
        <Tabs>
          <Tab type="button" $active={tab === "find"} onClick={() => setTab("find")}>
            <SearchIcon />
            Find Open Mics
          </Tab>
          <Tab type="button" $active={tab === "calendar"} onClick={() => setTab("calendar")}>
            <CalendarFilledIcon />
            My Calendar
          </Tab>
        </Tabs>
        <SearchBox>
          <MagnifierIcon />
          <input
            type="text"
            aria-label="Search by name or city"
            placeholder="Search by name or city"
            value={query}
            onChange={(e) => setQuery(e.target.value)}
          />
        </SearchBox>
        <MapFrame>
          <OpenMicMap />
          <MapCredit>
            <FaApple size={41} />
            Maps
            <a href="#legal">Legal</a>
          </MapCredit>
        </MapFrame>
        <ListHeading>Upcoming Open Mics</ListHeading>
        <List>
          {mics.map((mic) => (
            <Card key={mic.name}>
              <Info>
                <MicName>{mic.name}</MicName>
                {mic.address && (
                  <>
                    <Address>
                      <PinIcon />
                      <span>{mic.address}</span>
                    </Address>
                    <Chips>
                      <Chip>
                        <CalendarIcon />
                        {mic.day}
                      </Chip>
                      <Chip>
                        <ClockIcon />
                        {mic.time}
                      </Chip>
                    </Chips>
                    <Note>{mic.note}</Note>
                    <Spots>{mic.spots} spots</Spots>
                  </>
                )}
              </Info>
              {mic.address && <SignUpButton type="button">Sign Up</SignUpButton>}
            </Card>
          ))}
        </List>
        <Footer>
          <ScanButton type="button">
            <QrIcon />
            Scan to check in
          </ScanButton>
        </Footer>
      </Screen>
    </>
  );
};

export default App;
